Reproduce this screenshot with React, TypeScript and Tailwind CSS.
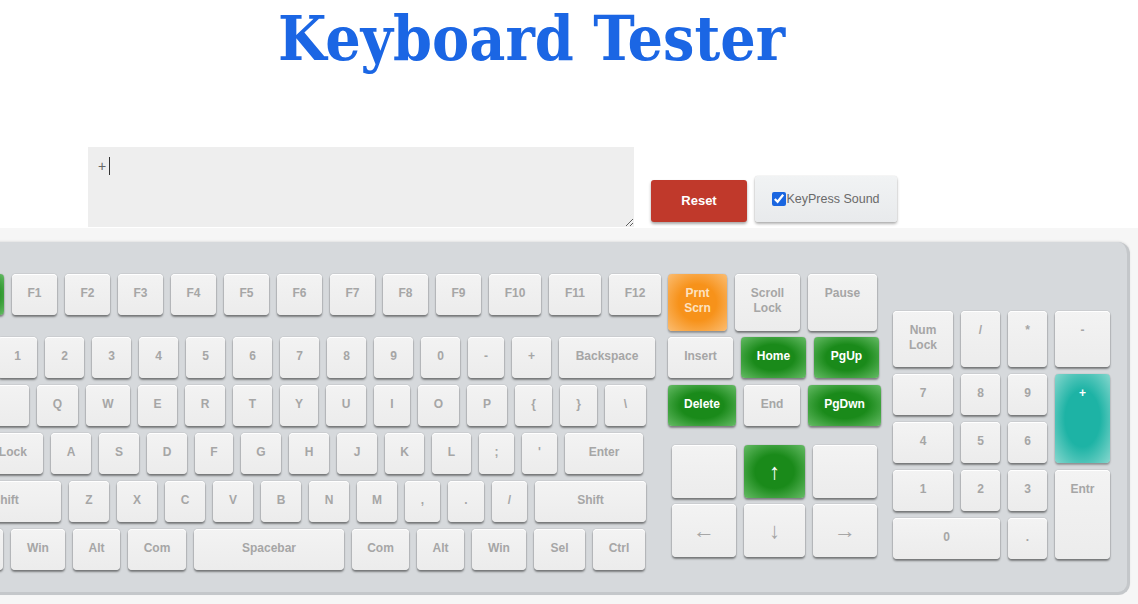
import React from 'react';

type KeyDef = { l: string; c: string; t?: 'g' | 'o' | 'c'; a?: boolean };

const keyBase =
    "rounded-[4px] shrink-0 text-center pt-[12px] leading-[15px] text-[12px] font-bold whitespace-pre-line select-none font-['Liberation_Sans',Arial,sans-serif]";

const tones = {
    plain: 'bg-linear-to-b from-[#f3f3f3] to-[#ececec] text-[#a6a6a6] shadow-[0_2px_2px_rgba(0,0,0,0.42),0_0_1px_rgba(0,0,0,0.5),inset_0_1px_0_#ffffff]',
    g: 'bg-[radial-gradient(ellipse_at_center,#1a8a1a_45%,#66bb66_100%)] text-white shadow-[0_2px_2px_rgba(0,0,0,0.38),0_0_1px_rgba(0,0,0,0.45)]',
    o: 'bg-[radial-gradient(ellipse_at_center,#f7921a_45%,#fbbd72_100%)] text-[#fde2c0] shadow-[0_2px_2px_rgba(0,0,0,0.3),0_0_1px_rgba(0,0,0,0.35)]',
    c: 'bg-[radial-gradient(ellipse_at_center,#1db3a5_45%,#86d7ce_100%)] text-white shadow-[0_2px_2px_rgba(0,0,0,0.3),0_0_1px_rgba(0,0,0,0.35)]',
};

function Key({ k }: { k: KeyDef }) {
    const tone = k.t ? tones[k.t] : tones.plain;
    return (
        <div className={`${keyBase} ${tone} ${k.c} ${k.a ? 'text-[22px] font-normal leading-[30px]' : ''}`}>
            {k.l}
        </div>
    );
}

const h41 = 'h-[41px]';

const mainRows: KeyDef[][] = [
    [
        { l: 'Esc', c: `w-[54px] ${h41}`, t: 'g' },
        { l: 'F1', c: `w-[45px] ${h41}` },
        { l: 'F2', c: `w-[45px] ${h41}` },
        { l: 'F3', c: `w-[45px] ${h41}` },
        { l: 'F4', c: `w-[45px] ${h41}` },
        { l: 'F5', c: `w-[45px] ${h41}` },
        { l: 'F6', c: `w-[45px] ${h41}` },
        { l: 'F7', c: `w-[45px] ${h41}` },
        { l: 'F8', c: `w-[45px] ${h41}` },
        { l: 'F9', c: `w-[45px] ${h41}` },
        { l: 'F10', c: `w-[52px] ${h41}` },
        { l: 'F11', c: `w-[52px] ${h41}` },
        { l: 'F12', c: `w-[52px] ${h41}` },
    ],
    [
        { l: '`', c: `w-[40px] ${h41}` },
        { l: '1', c: `w-[39px] ${h41}` },
        { l: '2', c: `w-[39px] ${h41}` },
        { l: '3', c: `w-[39px] ${h41}` },
        { l: '4', c: `w-[39px] ${h41}` },
        { l: '5', c: `w-[39px] ${h41}` },
        { l: '6', c: `w-[39px] ${h41}` },
        { l: '7', c: `w-[39px] ${h41}` },
        { l: '8', c: `w-[39px] ${h41}` },
        { l: '9', c: `w-[39px] ${h41}` },
        { l: '0', c: `w-[39px] ${h41}` },
        { l: '-', c: `w-[36px] ${h41}` },
        { l: '+', c: `w-[39px] ${h41}` },
        { l: 'Backspace', c: `w-[96px] ${h41}` },
    ],
    [
        { l: 'Tab', c: `w-[79px] ${h41}` },
        { l: 'Q', c: `w-[41px] ${h41}` },
        { l: 'W', c: `w-[44px] ${h41}` },
        { l: 'E', c: `w-[39px] ${h41}` },
        { l: 'R', c: `w-[40px] ${h41}` },
        { l: 'T', c: `w-[39px] ${h41}` },
        { l: 'Y', c: `w-[38px] ${h41}` },
        { l: 'U', c: `w-[40px] ${h41}` },
        { l: 'I', c: `w-[36px] ${h41}` },
        { l: 'O', c: `w-[41px] ${h41}` },
        { l: 'P', c: `w-[40px] ${h41}` },
        { l: '{', c: `w-[37px] ${h41}` },
        { l: '}', c: `w-[37px] ${h41}` },
        { l: '\\', c: `w-[41px] ${h41}` },
    ],
    [
        { l: 'Caps Lock', c: `w-[93px] ${h41}` },
        { l: 'A', c: `w-[40px] ${h41}` },
        { l: 'S', c: `w-[40px] ${h41}` },
        { l: 'D', c: `w-[40px] ${h41}` },
        { l: 'F', c: `w-[38px] ${h41}` },
        { l: 'G', c: `w-[40px] ${h41}` },
        { l: 'H', c: `w-[40px] ${h41}` },
        { l: 'J', c: `w-[40px] ${h41}` },
        { l: 'K', c: `w-[39px] ${h41}` },
        { l: 'L', c: `w-[39px] ${h41}` },
        { l: ';', c: `w-[35px] ${h41}` },
        { l: "'", c: `w-[35px] ${h41}` },
        { l: 'Enter', c: `w-[78px] ${h41}` },
    ],
    [
        { l: 'Shift', c: `w-[111px] ${h41}` },
        { l: 'Z', c: `w-[40px] ${h41}` },
        { l: 'X', c: `w-[40px] ${h41}` },
        { l: 'C', c: `w-[40px] ${h41}` },
        { l: 'V', c: `w-[40px] ${h41}` },
        { l: 'B', c: `w-[40px] ${h41}` },
        { l: 'N', c: `w-[40px] ${h41}` },
        { l: 'M', c: `w-[40px] ${h41}` },
        { l: ',', c: `w-[35px] ${h41}` },
        { l: '.', c: `w-[36px] ${h41}` },
        { l: '/', c: `w-[35px] ${h41}` },
        { l: 'Shift', c: `w-[111px] ${h41}` },
    ],
    [
        { l: 'Ctrl', c: `w-[53px] ${h41}` },
        { l: 'Win', c: `w-[54px] ${h41}` },
        { l: 'Alt', c: `w-[47px] ${h41}` },
        { l: 'Com', c: `w-[58px] ${h41}` },
        { l: 'Spacebar', c: `w-[150px] ${h41}` },
        { l: 'Com', c: `w-[57px] ${h41}` },
        { l: 'Alt', c: `w-[47px] ${h41}` },
        { l: 'Win', c: `w-[54px] ${h41}` },
        { l: 'Sel', c: `w-[51px] ${h41}` },
        { l: 'Ctrl', c: `w-[52px] ${h41}` },
    ],
];

const navRows: { wrap: string; keys: KeyDef[] }[] = [
    {
        wrap: '',
        keys: [
            { l: 'Prnt\nScrn', c: 'w-[59px] h-[57px]', t: 'o' },
            { l: 'Scroll\nLock', c: 'w-[65px] h-[57px]' },
            { l: 'Pause', c: 'w-[69px] h-[57px]' },
        ],
    },
    {
        wrap: 'mt-[6px]',
        keys: [
            { l: 'Insert', c: `w-[65px] ${h41}` },
            { l: 'Home', c: `w-[65px] ${h41}`, t: 'g' },
            { l: 'PgUp', c: `w-[65px] ${h41}`, t: 'g' },
        ],
    },
    {
        wrap: 'mt-[7px]',
        keys: [
            { l: 'Delete', c: `w-[68px] ${h41}`, t: 'g' },
            { l: 'End', c: `w-[56px] ${h41}` },
            { l: 'PgDwn', c: `w-[73px] ${h41}`, t: 'g' },
        ],
    },
    {
        wrap: 'mt-[19px] pl-[4px]',
        keys: [
            { l: '', c: 'w-[64px] h-[53px]' },
            { l: '↑', c: 'w-[61px] h-[53px]', t: 'g', a: true },
            { l: '', c: 'w-[64px] h-[53px]' },
        ],
    },
    {
        wrap: 'mt-[6px] pl-[4px]',
        keys: [
            { l: '←', c: 'w-[64px] h-[53px]', a: true },
            { l: '↓', c: 'w-[61px] h-[53px]', a: true },
            { l: '→', c: 'w-[64px] h-[53px]', a: true },
        ],
    },
];

const numpad: KeyDef[] = [
    { l: 'Num\nLock', c: 'w-full h-full' },
    { l: '/', c: 'w-full h-full' },
    { l: '*', c: 'w-full h-full' },
    { l: '-', c: 'w-full h-full' },
    { l: '7', c: 'w-full h-full' },
    { l: '8', c: 'w-full h-full' },
    { l: '9', c: 'w-full h-full' },
    { l: '+', c: 'w-full h-full row-span-2', t: 'c' },
    { l: '4', c: 'w-full h-full' },
    { l: '5', c: 'w-full h-full' },
    { l: '6', c: 'w-full h-full' },
    { l: '1', c: 'w-full h-full' },
    { l: '2', c: 'w-full h-full' },
    { l: '3', c: 'w-full h-full' },
    { l: 'Entr', c: 'w-full h-full row-span-2' },
    { l: '0', c: 'w-full h-full col-span-2' },
    { l: '.', c: 'w-full h-full' },
];

export default function App() {
    return (
        <div className="w-[1138px] h-[604px] bg-white overflow-hidden">
            <div className="h-[228px]">
                <h1 className="h-[80px] pl-[278px] pt-[8px] leading-none text-[62px] font-bold font-stretch-condensed text-[#1b66e4] font-['DejaVu_Serif',serif]">
                    Keyboard Tester
                </h1>

                <div className="mt-[67px] ml-[88px] flex items-end">
                    <div className="relative">
                        <textarea
                            readOnly
                            defaultValue="+"
                            className="block w-[546px] h-[80px] bg-[#eeeeee] px-[10px] py-[10px] text-[14px] leading-[18px] text-[#666] outline-none font-['Liberation_Sans',Arial,sans-serif]"
                        />
                        <span className="absolute left-[21px] top-[10px] w-px h-[18px] bg-[#333]" />
                    </div>
                    <button className="ml-[17px] mb-[5px] w-[96px] h-[42px] rounded-[3px] bg-[#c0392b] text-white text-[13px] font-bold shadow-[0_2px_3px_rgba(0,0,0,0.35)] font-['Liberation_Sans',Arial,sans-serif]">
                        Reset
                    </button>
                    <label className="ml-[8px] mb-[5px] w-[142px] h-[46px] rounded-[3px] bg-linear-to-b from-[#f1f3f4] to-[#e8eaec] text-[#6a6a6a] text-[12.5px] flex items-center justify-center shadow-[0_2px_3px_rgba(0,0,0,0.3),0_0_1px_rgba(0,0,0,0.3)] font-['Liberation_Sans',Arial,sans-serif]">
                        <input type="checkbox" defaultChecked className="m-0 w-[14px] h-[14px] accent-[#1a66e0]" />
                        KeyPress Sound
                    </label>
                </div>
            </div>

            <div className="h-[376px] bg-[#f6f6f6] pt-[14px] overflow-hidden">
                <div className="ml-[-62px] w-[1192px] flex items-start rounded-[12px] bg-[#d6d9dc] border-r-[3px] border-b-[3px] border-[#c4c7ca] pl-[12px] pr-[17px] pt-[32px] pb-[22px] shadow-[0_-1px_2px_rgba(0,0,0,0.08)]">
                    <div className="flex flex-col">
                        {mainRows.map((row, i) => (
                            <div key={i} className={`flex gap-[8px] ${i === 1 ? 'mt-[22px]' : i > 1 ? 'mt-[7px]' : ''}`}>
                                {row.map((k, j) => (
                                    <Key key={j} k={k} />
                                ))}
                            </div>
                        ))}
                    </div>

                    <div className="ml-[7px] w-[213px] flex flex-col">
                        {navRows.map((row, i) => (
                            <div key={i} className={`flex gap-[8px] ${row.wrap}`}>
                                {row.keys.map((k, j) => (
                                    <Key key={j} k={k} />
                                ))}
                            </div>
                        ))}
                    </div>

                    <div className="ml-[12px] mt-[37px] grid grid-cols-[60px_39px_39px_55px] grid-rows-[56px_41px_41px_41px_41px] gap-x-[8px] gap-y-[7px]">
                        {numpad.map((k, i) => (
                            <Key key={i} k={k} />
                        ))}
                    </div>
                </div>
            </div>
        </div>
    );
}
